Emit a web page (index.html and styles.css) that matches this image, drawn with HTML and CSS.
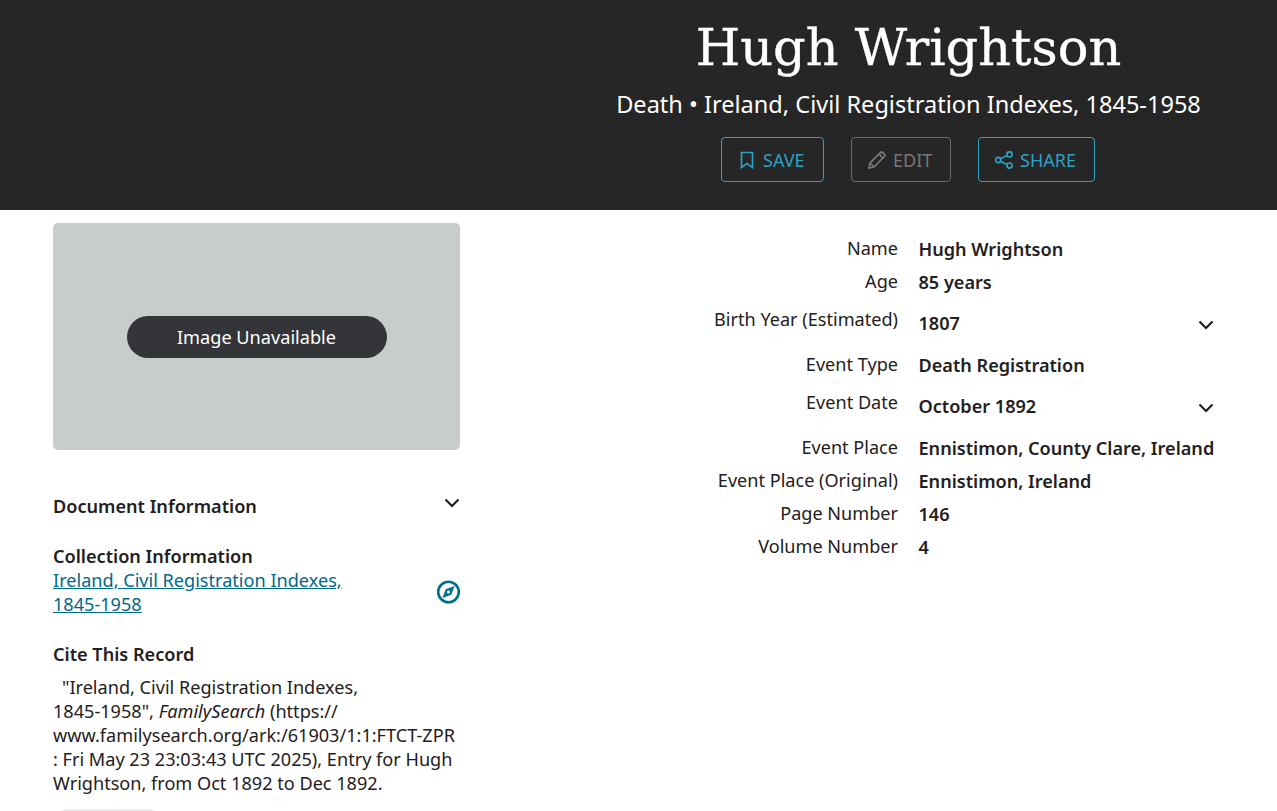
FILE: index.html
```html
<!DOCTYPE html>
<html lang="en">
<head>
<meta charset="utf-8">
<title>Hugh Wrightson</title>
<link rel="stylesheet" href="styles.css">
</head>
<body>
<header class="hero">
  <h1 class="hero-title">Hugh Wrightson</h1>
  <p class="hero-sub">Death • Ireland, Civil Registration Indexes, 1845-1958</p>
  <div class="actions">
    <button class="btn btn-save"><svg class="ic" viewBox="0 0 18 18"><path d="M3.500 1.500h11v15L9 12.600 3.500 16.500z"/></svg>SAVE</button>
    <button class="btn btn-edit"><svg class="ic" viewBox="0 0 18 18"><path d="M1 17l1-5L12.500 1.600a1.700 1.700 0 0 1 2.400 0l1.500 1.500a1.700 1.700 0 0 1 0 2.400L6 16z"/><path d="M2 12l4 4M11 3.200l3.800 3.800"/></svg>EDIT</button>
    <button class="btn btn-share"><svg class="ic" viewBox="0 0 18 18"><circle cx="3.200" cy="9" r="2.600"/><circle cx="14.500" cy="3.400" r="2.600"/><circle cx="14.500" cy="14.600" r="2.600"/><path d="M5.600 7.800l6.500-3.200M5.600 10.200l6.500 3.200"/></svg>SHARE</button>
  </div>
</header>
<main class="layout">
  <aside class="side">
    <div class="thumb"><span class="pill">Image Unavailable</span></div>
    <section class="doc">
      <h2 class="sec-title">Document Information</h2>
      <svg class="chev chev-doc" viewBox="0 0 16 10"><path d="M1.500 1.500L8 8l6.500-6.500"/></svg>
    </section>
    <section class="coll">
      <h2 class="sec-title">Collection Information</h2>
      <div class="coll-row">
        <a class="coll-link" href="#">Ireland, Civil Registration Indexes, 1845-1958</a>
        <svg class="compass" viewBox="0 0 24 24"><circle cx="12" cy="12" r="10.300"/><path class="needle" d="M18 6L14.800 14.800 6 18 9.200 9.200z"/><circle class="hub" cx="12" cy="12" r="1.500"/></svg>
      </div>
    </section>
    <section class="cite">
      <h2 class="sec-title">Cite This Record</h2>
      <p class="cite-text">"Ireland, Civil Registration Indexes, <span class="nb">1845-1958",</span> <em>FamilySearch</em> (https://<wbr>www.familysearch.org/ark:/61903/1:1:FTCT-ZPR<wbr> : Fri May 23 23:03:43 UTC 2025), Entry for Hugh Wrightson, from Oct 1892 to Dec 1892.</p>
      <div class="copy"></div>
    </section>
  </aside>
  <section class="facts">
    <div class="row"><span class="k">Name</span><span class="v">Hugh Wrightson</span></div>
    <div class="row"><span class="k">Age</span><span class="v">85 years</span></div>
    <div class="row row-x"><span class="k">Birth Year (Estimated)</span><span class="v">1807</span><svg class="chev" viewBox="0 0 16 10"><path d="M1.500 1.500L8 8l6.500-6.500"/></svg></div>
    <div class="row"><span class="k">Event Type</span><span class="v">Death Registration</span></div>
    <div class="row row-x"><span class="k">Event Date</span><span class="v">October 1892</span><svg class="chev" viewBox="0 0 16 10"><path d="M1.500 1.500L8 8l6.500-6.500"/></svg></div>
    <div class="row"><span class="k">Event Place</span><span class="v">Ennistimon, County Clare, Ireland</span></div>
    <div class="row"><span class="k">Event Place (Original)</span><span class="v">Ennistimon, Ireland</span></div>
    <div class="row"><span class="k">Page Number</span><span class="v">146</span></div>
    <div class="row"><span class="k">Volume Number</span><span class="v">4</span></div>
  </section>
</main>
</body>
</html>
```
FILE: styles.css
```css
* { box-sizing: border-box; }
html, body { margin: 0; height: 811px; overflow: hidden; background: #fff; }
body { font-family: "Noto Sans", sans-serif; font-size: 18.1px; line-height: 24px; color: #1f2021; }

.hero { height: 210px; background: #262626; color: #fff; padding: 12px 0 0 540px; display: flex; flex-direction: column; align-items: center; }
.hero-title { margin: 0; font-family: "DejaVu Serif", serif; font-weight: 400; font-size: 51px; line-height: 72px; -webkit-text-stroke: 0.4px #fff; }
.hero-sub { margin: 5px 0 0; font-size: 23.55px; line-height: 30px; }
.actions { display: flex; gap: 27px; margin: 18px 0 0 -1px; }
.btn { height: 45px; display: flex; align-items: center; gap: 7px; padding: 0 0 0 16px; background: transparent; border: 1px solid #2ea0c2; border-radius: 4px; color: #2ea0c2; font: 18px/24px "Noto Sans", sans-serif; }
.btn-save { width: 103px; }
.btn-edit { width: 100px; border-color: #6a6a6a; color: #787878; }
.btn-share { width: 117px; }
.ic { width: 18px; height: 18px; fill: none; stroke: currentColor; stroke-width: 1.700; }

.layout { display: flex; padding: 13px 0 0 53px; }
.side { width: 407px; flex: none; font-size: 18.13px; }
.thumb { height: 227px; background: #c9cccd; border-radius: 5px; display: flex; align-items: center; justify-content: center; }
.pill { width: 260px; height: 42px; border-radius: 21px; background: #333538; color: #fff; display: flex; align-items: center; justify-content: center; font-size: 18.15px; }
.sec-title { margin: 0; font-size: 18.13px; line-height: 24px; font-weight: 600; }
.doc { margin-top: 44px; display: flex; justify-content: space-between; align-items: flex-start; }
.chev { width: 16px; height: 10px; fill: none; stroke: #1f2021; stroke-width: 2.200; }
.chev-doc { margin-top: 4px; }
.coll { margin-top: 26px; }
.coll-row { display: flex; justify-content: space-between; align-items: center; }
.coll-link { width: 320px; color: #00688b; }
.compass { width: 24px; height: 24px; margin-right: -0.500px; transform: translateX(-0.500px); fill: none; stroke: #006f8e; stroke-width: 2.600; }
.compass .needle { fill: #006f8e; stroke: none; }
.compass .hub { fill: #fff; stroke: none; }
.cite { margin-top: 26px; }
.cite-text { margin: 9px 0 0; text-indent: 9px; }
.nb { white-space: nowrap; }
.copy { margin: 14px 0 0 3px; width: 104px; height: 40px; background: #eceded; border-radius: 10px; }

.facts { flex: 1; padding: 14px 62px 0 80px; }
.row { display: grid; grid-template-columns: 378.500px 1fr auto; height: 33px; align-items: start; }
.row-x { height: 50px; padding-top: 8px; }
.k { text-align: right; padding-right: 20.500px; line-height: 22px; }
.v { font-weight: 600; grid-column: 2; }
.row-x .k { margin-top: -3px; }
.row-x .chev { margin: 9px 1.500px 0 0; }
```
